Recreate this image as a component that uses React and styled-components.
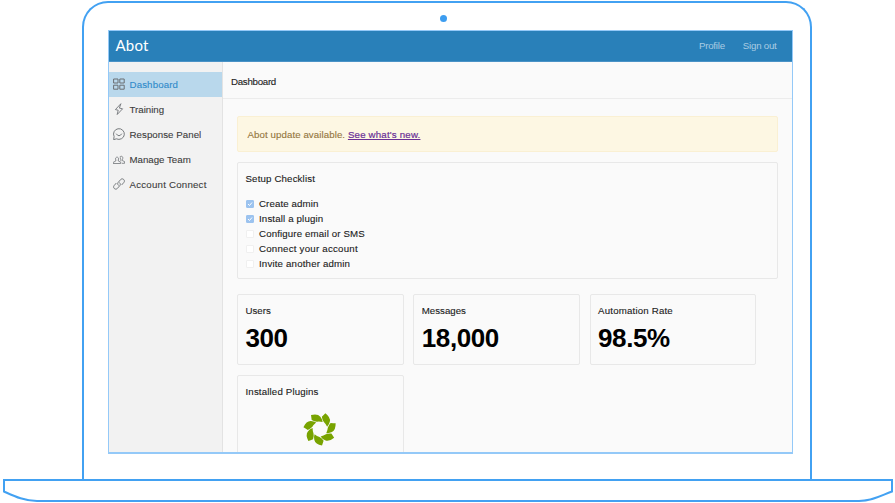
import React from "react";
import styled, { createGlobalStyle } from "styled-components";

const GlobalStyle = createGlobalStyle`
  * { box-sizing: border-box; }
  body { margin: 0; background: #fff; }
`;

const Page = styled.div`
  width: 895px;
  height: 503px;
  overflow: hidden;
  padding-top: 1px;
  font: 9.7px/15px "Liberation Sans", Arial, sans-serif;
  color: #222;
`;

const Lid = styled.div`
  width: 730px;
  height: 478px;
  margin-left: 82px;
  padding: 12px 0 0 24px;
  border: 2px solid #42a1f2;
  border-bottom: 0;
  border-radius: 26px 26px 0 0;
`;

const Camera = styled.div`
  width: 7px;
  height: 7px;
  margin: 0 0 8px 332px;
  border-radius: 50%;
  background: #3d9df0;
`;

const Screen = styled.div`
  width: 685px;
  height: 424px;
  overflow: hidden;
  display: flex;
  flex-direction: column;
  border: 1px solid #94c9f8;
  border-bottom-width: 2px;
  background: #fafafa;
`;

const TopBar = styled.header`
  flex: none;
  height: 31px;
  display: flex;
  align-items: center;
  padding: 0 15.5px 1px 6.5px;
  background: #2980b9;
  border-bottom: 1px solid #4a92c6;
`;

const Brand = styled.div`
  flex: 1;
  color: #fff;
  font: 15px/20px Lato, sans-serif;
  letter-spacing: 0.2px;
  padding-bottom: 2px;
`;

const TopLink = styled.a`
  margin-left: 18px;
  color: #a9cce3;
  letter-spacing: ${(p) => p.$track}px;
`;

const Body = styled.div`
  flex: 1;
  min-height: 0;
  display: flex;
`;

const Sidebar = styled.nav`
  flex: none;
  width: 114px;
  padding-top: 10px;
  background: #f2f2f2;
  border-right: 1px solid #e3e3e3;
`;

const NavItem = styled.div`
  height: 25px;
  display: flex;
  align-items: center;
  gap: 4.5px;
  padding: 0 0 1px 4px;
  white-space: nowrap;
  letter-spacing: ${(p) => p.$track}px;
  color: ${(p) => (p.$active ? "#2f8aca" : "#3c3c3c")};
  -webkit-text-stroke: 0.1px currentColor;
  background: ${(p) => (p.$active ? "#b9d8ec" : "transparent")};
`;

const Icon = styled.svg`
  flex: none;
  width: 12px;
  height: 12px;
  fill: none;
  stroke: #6a6e72;
  stroke-width: 1;
  stroke-linecap: round;
  stroke-linejoin: round;
`;

const Main = styled.main`
  flex: 1;
  min-width: 0;
  -webkit-text-stroke: 0.12px currentColor;
`;

const PageTitle = styled.div`
  height: 37px;
  padding: 12px 0 0 8px;
  border-bottom: 1px solid #ececec;
  letter-spacing: -0.27px;
`;

const Content = styled.div`
  padding: 17px 14px 0;
`;

const Alert = styled.div`
  height: 36px;
  display: flex;
  align-items: center;
  padding: 1px 0 0 9.5px;
  border: 1px solid #faf0d3;
  border-radius: 2px;
  background: #fdf7e3;
  color: #94763d;
  letter-spacing: 0.08px;
  white-space: pre;
`;

const AlertLink = styled.a`
  color: #6a2f96;
  text-decoration: underline;
  letter-spacing: 0.19px;
  -webkit-text-stroke: 0.2px currentColor;
`;

const Panel = styled.section`
  height: ${(p) => p.$height}px;
  padding: 8px 7.5px 0;
  border: 1px solid #e8e8e8;
  border-radius: 2px;
  color: #1c1c1c;
`;

const Checklist = styled(Panel)`
  margin: 10px 0 15px;
`;

const Caption = styled.div`
  height: 16px;
  line-height: 16px;
  letter-spacing: ${(p) => p.$track || 0}px;
`;

const Checks = styled.div`
  padding-top: 9px;
`;

const CheckRow = styled.div`
  height: 15.1px;
  display: flex;
  align-items: center;
  gap: 5.5px;
  letter-spacing: ${(p) => p.$track}px;
`;

const Box = styled.span`
  width: 8px;
  height: 8px;
  display: flex;
  border: 1px solid ${(p) => (p.$checked ? "#9cc3ef" : "#f0f0f0")};
  border-radius: 1px;
  background: ${(p) => (p.$checked ? "#9cc3ef" : "#fff")};
`;

const Cards = styled.div`
  display: grid;
  grid-template-columns: repeat(3, 166.6px);
  column-gap: 9.7px;
  row-gap: 10px;
`;

const Figure = styled.div`
  margin-top: 4px;
  color: #000;
  font-size: 26px;
  line-height: 30px;
  font-weight: 700;
  letter-spacing: -0.4px;
  -webkit-text-stroke: 0;
`;

const PluginLogo = styled.svg`
  display: block;
  width: 34px;
  height: 34px;
  margin: 12px auto 0;
  fill: #78a300;
`;

const Base = styled.svg`
  display: block;
  width: 895px;
  height: 24px;
  fill: #fff;
  stroke: #42a1f2;
  stroke-width: 2;
`;

const icons = {
  grid: (
    <path d="M1 1h4v4H1zM7.200 1h4v4h-4zM1 7.200h4v4H1zM7.200 7.200h4v4h-4z" />
  ),
  bolt: <path strokeWidth=".85" d="M7.600 1 2.400 6.600 5.200 7.200 4.200 11.500 9.600 5.800 6.800 5.200z" />,
  chat: (
    <path strokeWidth=".9" d="M.7 11.300 1.100 8.500A5.400 5.400 0 1 1 3.700 11zM3.400 6Q6 9.800 8.600 6" />
  ),
  team: (
    <path
      strokeWidth=".75"
      d="M.5 10.500h7.200V9.200L5.300 8V7c1.500-3.800-4-3.800-2.500 0v1L.5 9.200zM7 3.700c2-1.400 3.600.3 2.400 2.900v1l2.200 1v1.700H9.200M7.400 4.800c-.2.8.1 1.500.5 2v1"
    />
  ),
  link: (
    <path
      strokeWidth=".9"
      d="M5.300 7.200C4.300 6 4.500 5 5.500 4L7.800 1.400C9.700-.3 12.600 2.300 10.900 4.400L8.900 6.700M6.700 4.800C7.700 6 7.500 7 6.500 8L4.200 10.600C2.300 12.300-.6 9.700 1.100 7.600L3.100 5.300"
    />
  ),
};

const navItems = [
  { label: "Dashboard", icon: "grid", track: 0.13, active: true },
  { label: "Training", icon: "bolt", track: 0 },
  { label: "Response Panel", icon: "chat", track: 0.05 },
  { label: "Manage Team", icon: "team", track: 0 },
  { label: "Account Connect", icon: "link", track: 0.22 },
];

const checks = [
  { label: "Create admin", done: true, track: 0.12 },
  { label: "Install a plugin", done: true, track: 0.15 },
  { label: "Configure email or SMS", track: 0.14 },
  { label: "Connect your account", track: 0.23 },
  { label: "Invite another admin", track: 0.17 },
];

const stats = [
  { label: "Users", value: "300", track: 0 },
  { label: "Messages", value: "18,000", track: 0 },
  { label: "Automation Rate", value: "98.5%", track: 0.18 },
];

export default function App() {
  return (
    <Page>
      <GlobalStyle />
      <Lid>
        <Camera />
        <Screen>
          <TopBar>
            <Brand>Abot</Brand>
            <TopLink $track={-0.22}>Profile</TopLink>
            <TopLink $track={-0.24}>Sign out</TopLink>
          </TopBar>
          <Body>
            <Sidebar>
              {navItems.map((n) => (
                <NavItem key={n.label} $active={n.active} $track={n.track}>
                  <Icon viewBox="0 0 12 12">{icons[n.icon]}</Icon>
                  {n.label}
                </NavItem>
              ))}
            </Sidebar>
            <Main>
              <PageTitle>Dashboard</PageTitle>
              <Content>
                <Alert>
                  Abot update available. <AlertLink>See what's new.</AlertLink>
                </Alert>
                <Checklist $height={117}>
                  <Caption $track={0.15}>Setup Checklist</Caption>
                  <Checks>
                    {checks.map((c) => (
                      <CheckRow key={c.label} $track={c.track}>
                        <Box $checked={c.done}>
                          {c.done && (
                            <svg width="6" height="6" viewBox="0 0 6 6">
                              <path d="M1 3l1.500 1.500L5 1.500" fill="none" stroke="#fff" />
                            </svg>
                          )}
                        </Box>
                        {c.label}
                      </CheckRow>
                    ))}
                  </Checks>
                </Checklist>
                <Cards>
                  {stats.map((s) => (
                    <Panel key={s.label} $height={71}>
                      <Caption $track={s.track}>{s.label}</Caption>
                      <Figure>{s.value}</Figure>
                    </Panel>
                  ))}
                  <Panel $height={100}>
                    <Caption $track={0.15}>Installed Plugins</Caption>
                    <PluginLogo viewBox="-51 -51 102 102">
                      {[0, 1, 2, 3, 4, 5, 6].map((k) => (
                        <path
                          key={k}
                          transform={`rotate(${(k * 360) / 7})`}
                          d="M-27-42Q-7-47 1-37Q7-30 8-21Q-1-23-9-22Q-17-22-25-27Q-26-35-27-42Z"
                        />
                      ))}
                    </PluginLogo>
                  </Panel>
                </Cards>
              </Content>
            </Main>
          </Body>
        </Screen>
      </Lid>
      <Base viewBox="0 0 895 24">
        <path d="M4 1H892V12.500C880 17 872 22 859 22H37C24 22 14 17 4 12.500Z" />
      </Base>
    </Page>
  );
}
